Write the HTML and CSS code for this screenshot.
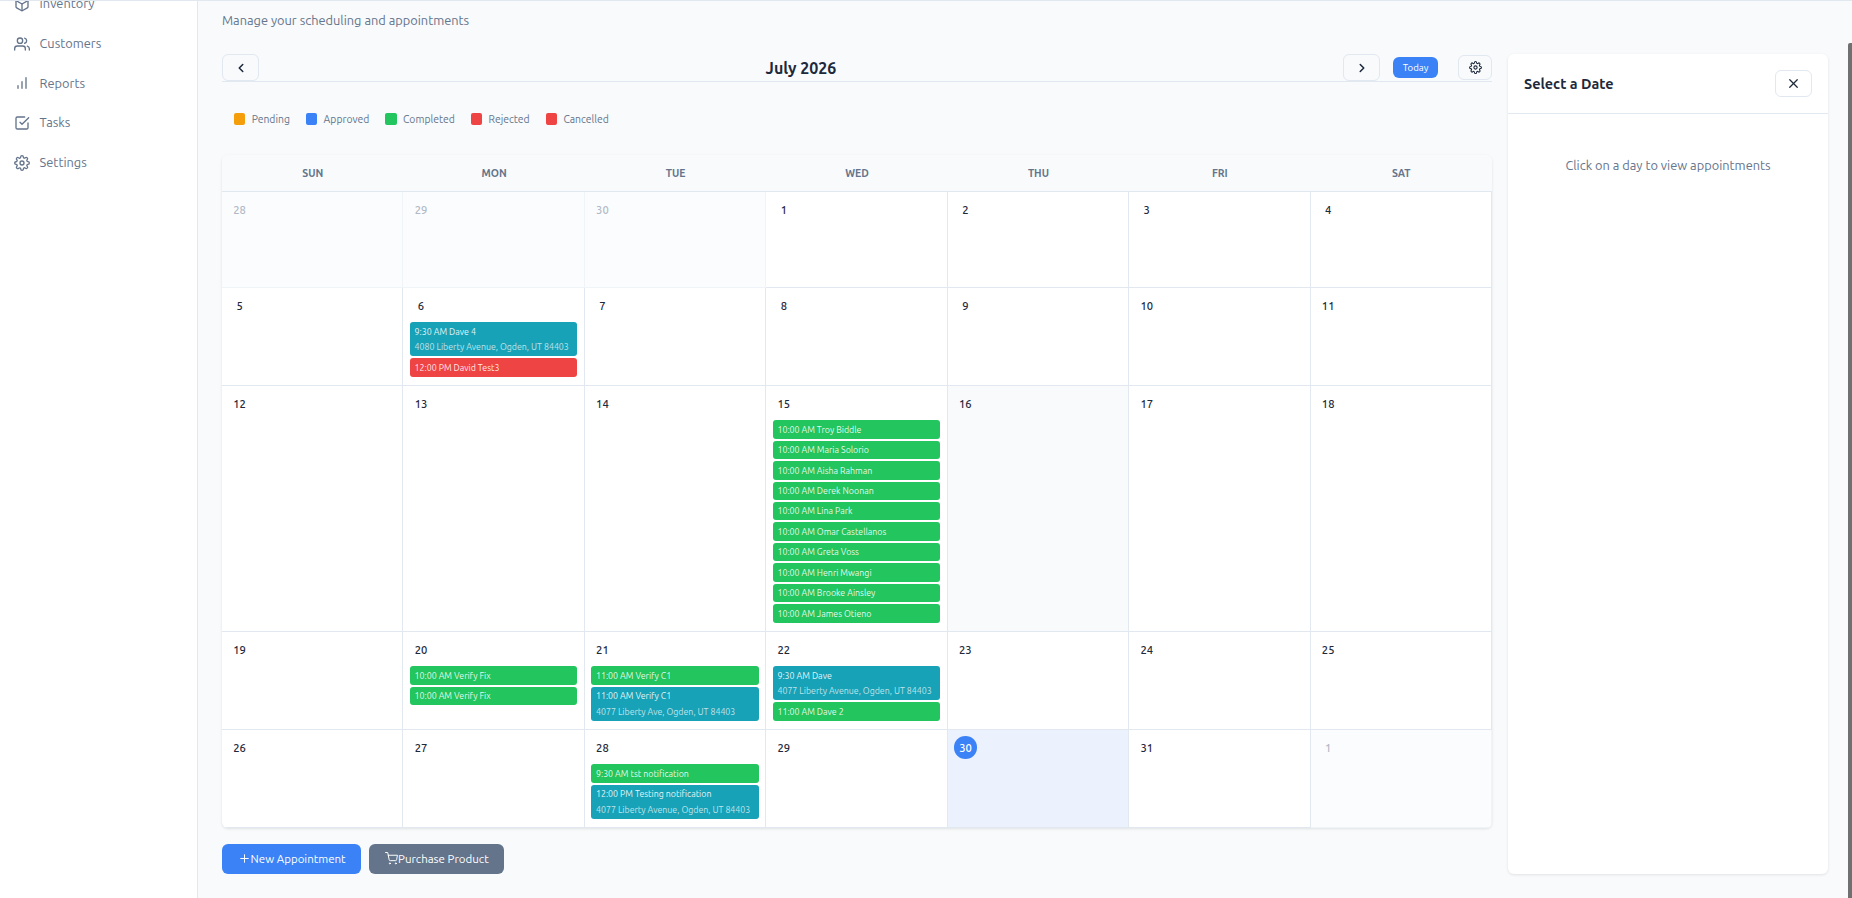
FILE: index.html
```html
<!DOCTYPE html>
<html lang="en">

<head>
    <meta charset="UTF-8">
    <title>Calendar</title>
    <link rel="stylesheet" href="styles.css">
</head>

<body>

    <div class="app">
        <aside class="sidebar">
            <nav class="nav">
                <a class="nav-item">
                    <svg class="icon" viewBox="0 0 24 24"><path d="M21 8a2 2 0 0 0-1-1.73l-7-4a2 2 0 0 0-2 0l-7 4A2 2 0 0 0 3 8v8a2 2 0 0 0 1 1.73l7 4a2 2 0 0 0 2 0l7-4A2 2 0 0 0 21 16Z"/><path d="m3.3 7 8.7 5 8.7-5"/><path d="M12 22V12"/></svg>
                    <span>Inventory</span>
                </a>
                <a class="nav-item">
                    <svg class="icon" viewBox="0 0 24 24"><path d="M17 21v-2a4 4 0 0 0-4-4H5a4 4 0 0 0-4 4v2"/><circle cx="9" cy="7" r="4"/><path d="M23 21v-2a4 4 0 0 0-3-3.87"/><path d="M16 3.13a4 4 0 0 1 0 7.75"/></svg>
                    <span>Customers</span>
                </a>
                <a class="nav-item">
                    <svg class="icon" viewBox="0 0 24 24"><path d="M12 20V10"/><path d="M18 20V4"/><path d="M6 20v-4"/></svg>
                    <span>Reports</span>
                </a>
                <a class="nav-item">
                    <svg class="icon" viewBox="0 0 24 24"><path d="m9 11 3 3L22 4"/><path d="M21 12v7a2 2 0 0 1-2 2H5a2 2 0 0 1-2-2V5a2 2 0 0 1 2-2h11"/></svg>
                    <span>Tasks</span>
                </a>
                <a class="nav-item">
                    <svg class="icon" viewBox="0 0 24 24"><use href="#gear"/></svg>
                    <span>Settings</span>
                </a>
            </nav>
        </aside>

        <main class="main">
            <p class="subtitle">Manage your scheduling and appointments</p>

            <div class="columns">
                <section class="calendar-col">
                    <div class="toolbar">
                        <button class="btn-outline"><svg class="icon chevron" viewBox="0 0 24 24"><path d="m15 18-6-6 6-6"/></svg></button>
                        <h2 class="month">July 2026</h2>
                        <div class="toolbar-right">
                            <button class="btn-outline"><svg class="icon chevron" viewBox="0 0 24 24"><path d="m9 18 6-6-6-6"/></svg></button>
                            <button class="btn-today">Today</button>
                            <button class="btn-outline btn-gear"><svg class="icon" viewBox="0 0 24 24"><use href="#gear"/></svg></button>
                        </div>
                    </div>

                    <div class="legend">
                        <span class="legend-item"><i class="swatch pending"></i>Pending</span>
                        <span class="legend-item"><i class="swatch approved"></i>Approved</span>
                        <span class="legend-item"><i class="swatch completed"></i>Completed</span>
                        <span class="legend-item"><i class="swatch rejected"></i>Rejected</span>
                        <span class="legend-item"><i class="swatch rejected"></i>Cancelled</span>
                    </div>

                    <div class="calendar">
                        <div class="weekdays">
                            <div>SUN</div>
                            <div>MON</div>
                            <div>TUE</div>
                            <div>WED</div>
                            <div>THU</div>
                            <div>FRI</div>
                            <div>SAT</div>
                        </div>
                        <div class="days" id="days"></div>
                    </div>

                    <div class="actions">
                        <button class="btn btn-primary"><svg class="icon" viewBox="0 0 24 24"><path d="M12 5v14"/><path d="M5 12h14"/></svg>New Appointment</button>
                        <button class="btn btn-secondary"><svg class="icon" viewBox="0 0 24 24"><circle cx="9" cy="21" r="1"/><circle cx="20" cy="21" r="1"/><path d="M1 1h4l2.68 13.39a2 2 0 0 0 2 1.61h9.72a2 2 0 0 0 2-1.61L23 6H6"/></svg>Purchase Product</button>
                    </div>
                </section>

                <aside class="panel">
                    <div class="panel-header">
                        <h3>Select a Date</h3>
                        <button class="btn-outline"><svg class="icon close" viewBox="0 0 24 24"><path d="M18 6 6 18"/><path d="m6 6 12 12"/></svg></button>
                    </div>
                    <p class="panel-empty">Click on a day to view appointments</p>
                </aside>
            </div>
        </main>
        <div class="scroll-thumb"></div>
    </div>

    <svg class="defs">
        <symbol id="gear" viewBox="0 0 24 24">
            <circle cx="12" cy="12" r="3"/>
            <path d="M19.4 15a1.65 1.65 0 0 0 .33 1.82l.06.06a2 2 0 0 1-2.83 2.83l-.06-.06a1.65 1.65 0 0 0-1.82-.33 1.65 1.65 0 0 0-1 1.51V21a2 2 0 0 1-4 0v-.09A1.65 1.65 0 0 0 9 19.4a1.65 1.65 0 0 0-1.82.33l-.06.06a2 2 0 0 1-2.83-2.83l.06-.06a1.65 1.65 0 0 0 .33-1.82 1.65 1.65 0 0 0-1.51-1H3a2 2 0 0 1 0-4h.09A1.65 1.65 0 0 0 4.6 9a1.65 1.65 0 0 0-.33-1.82l-.06-.06a2 2 0 0 1 2.83-2.83l.06.06A1.65 1.65 0 0 0 9 4.68a1.65 1.65 0 0 0 1-1.51V3a2 2 0 0 1 4 0v.09a1.65 1.65 0 0 0 1 1.51 1.65 1.65 0 0 0 1.82-.33l.06-.06a2 2 0 0 1 2.83 2.83l-.06.06A1.65 1.65 0 0 0 19.4 9a1.65 1.65 0 0 0 1.51 1H21a2 2 0 0 1 0 4h-.09a1.65 1.65 0 0 0-1.51 1z"/>
        </symbol>
    </svg>

    <script>
        const daysElement = document.getElementById('days');

        const appointments = {
            6: [
                ["confirmed", "9:30 AM Dave 4", "4080 Liberty Avenue, Ogden, UT 84403"],
                ["rejected", "12:00 PM David Test3"]
            ],
            15: [
                ["completed", "10:00 AM Troy Biddle"],
                ["completed", "10:00 AM Maria Solorio"],
                ["completed", "10:00 AM Aisha Rahman"],
                ["completed", "10:00 AM Derek Noonan"],
                ["completed", "10:00 AM Lina Park"],
                ["completed", "10:00 AM Omar Castellanos"],
                ["completed", "10:00 AM Greta Voss"],
                ["completed", "10:00 AM Henri Mwangi"],
                ["completed", "10:00 AM Brooke Ainsley"],
                ["completed", "10:00 AM James Otieno"]
            ],
            20: [
                ["completed", "10:00 AM Verify Fix"],
                ["completed", "10:00 AM Verify Fix"]
            ],
            21: [
                ["completed", "11:00 AM Verify C1"],
                ["confirmed", "11:00 AM Verify C1", "4077 Liberty Ave, Ogden, UT 84403"]
            ],
            22: [
                ["confirmed", "9:30 AM Dave", "4077 Liberty Avenue, Ogden, UT 84403"],
                ["completed", "11:00 AM Dave 2"]
            ],
            28: [
                ["completed", "9:30 AM tst notification"],
                ["confirmed", "12:00 PM Testing notification", "4077 Liberty Avenue, Ogden, UT 84403"]
            ]
        };

        function addDiv(parent, className, text) {
            const div = document.createElement("div");
            div.className = className;
            if (text) div.textContent = text;
            parent.appendChild(div);
            return div;
        }

        // July 2026 starts on a Wednesday
        for (let i = 0; i < 35; i++) {
            const date = new Date(2026, 5, 28 + i);
            const day = date.getDate();
            const inMonth = date.getMonth() === 6;
            const cell = addDiv(daysElement, "day");
            if (!inMonth) cell.classList.add("other-month");
            if (inMonth && day === 16) cell.classList.add("hovered");
            if (inMonth && day === 30) cell.classList.add("today");
            addDiv(cell, "day-number", String(day));

            if (!inMonth) continue;
            for (const [status, title, address] of appointments[day] || []) {
                const item = addDiv(cell, "appt " + status);
                addDiv(item, "appt-title", title);
                if (address) addDiv(item, "appt-address", address);
            }
        }
    </script>
</body>

</html>
```

FILE: styles.css
```css
* {
    box-sizing: border-box;
}

body {
    margin: 0;
    height: 898px;
    overflow: hidden;
    background: #f8fafc;
    color: #1e293b;
    font-family: Ubuntu, "Noto Sans", "Open Sans", sans-serif;
    font-size: 12.8px;
    line-height: 1.5;
}

h2,
h3,
p {
    margin: 0;
}

button {
    font-family: inherit;
    padding: 0;
    cursor: pointer;
}

.icon {
    width: 16px;
    height: 16px;
    flex-shrink: 0;
    fill: none;
    stroke: currentColor;
    stroke-width: 2;
    stroke-linecap: round;
    stroke-linejoin: round;
}

.defs {
    display: none;
}

.app {
    display: flex;
    height: 898px;
    overflow: hidden;
    border-top: 1px solid #e2e8f0;
}

/* sidebar */
.sidebar {
    width: 198px;
    flex-shrink: 0;
    background: #fff;
    border-right: 1px solid #e2e8f0;
    overflow: hidden;
}

.nav {
    margin-top: -17px;
}

.nav-item {
    display: flex;
    align-items: center;
    gap: 9.6px;
    height: 39.7px;
    padding-left: 14px;
    color: #64748b;
}

/* main */
.main {
    flex: 1;
    padding: 10px 24px 0;
}

.subtitle {
    height: 43px;
    color: #64748b;
}

.columns {
    display: flex;
    gap: 16px;
}

.calendar-col {
    width: 1270px;
}

.toolbar {
    display: flex;
    justify-content: space-between;
    align-items: center;
    height: 28px;
    border-bottom: 1px solid #e2e8f0;
}

.toolbar-right {
    display: flex;
    align-items: center;
}

.month {
    font-size: 16px;
    font-weight: 600;
}

.btn-outline {
    display: flex;
    align-items: center;
    justify-content: center;
    width: 37px;
    height: 27px;
    background: transparent;
    color: #1e293b;
    border: 1px solid #e2e8f0;
    border-radius: 6px;
}

.chevron {
    width: 14px;
    height: 14px;
    stroke-width: 2.6;
}

.btn-today {
    width: 45px;
    height: 21px;
    margin: 0 20px 0 13px;
    background: #3b82f6;
    color: #fff;
    border: none;
    border-radius: 6px;
    font-size: 9.6px;
}

.btn-gear {
    width: 34px;
    height: 25px;
}

.btn-gear .icon {
    width: 13px;
    height: 13px;
}

.legend {
    display: flex;
    gap: 16px;
    height: 73px;
    padding: 28px 12px 0;
    color: #64748b;
    font-size: 10.4px;
}

.legend-item {
    display: flex;
    align-items: center;
    gap: 6.4px;
    height: 19px;
}

.swatch {
    width: 11.3px;
    height: 11.2px;
    margin-bottom: 1px;
    border-radius: 2px;
}

.pending {
    background: #f59e0b;
}

.approved {
    background: #3b82f6;
}

.completed {
    background: #22c55e;
}

.rejected {
    background: #ef4444;
}

.confirmed {
    background: #17a2b8;
}

/* calendar */
.calendar {
    background: #fff;
    border-radius: 6px;
    overflow: hidden;
    box-shadow: 0 1px 3px rgba(0, 0, 0, 0.1);
}

.weekdays {
    display: grid;
    grid-template-columns: repeat(7, 1fr);
    height: 37px;
    background: #f8fafc;
    border-bottom: 1px solid #e2e8f0;
    color: #64748b;
    font-size: 10.4px;
    font-weight: 600;
    line-height: 36px;
    text-align: center;
}

.days {
    display: grid;
    grid-template-columns: repeat(7, 1fr);
    grid-template-rows: 96px 97.8px 246.2px 98px 98px;
}

.day {
    padding: 6.4px;
    border-right: 1px solid #e2e8f0;
    border-bottom: 1px solid #e2e8f0;
    min-width: 0;
}

.day-number {
    width: 22.4px;
    height: 22.4px;
    margin-bottom: 5.7px;
    border-radius: 50%;
    font-size: 11.2px;
    font-weight: 500;
    line-height: 24px;
    text-align: center;
}

.other-month {
    background: #f8fafc;
    opacity: 0.5;
}

.other-month .day-number {
    color: #64748b;
}

.hovered {
    background: #f8fafc;
}

.today {
    background: #ebf2fe;
}

.today .day-number {
    width: 22.8px;
    background: #3b82f6;
    color: #fff;
}

.appt {
    margin-bottom: 2px;
    padding: 2.4px 4.8px 0.8px;
    border-radius: 3px;
    color: rgba(255, 255, 255, 0.9);
    font-size: 8.8px;
    line-height: 15.25px;
    white-space: nowrap;
    overflow: hidden;
}

.appt-address {
    opacity: 0.8;
}

/* bottom buttons */
.actions {
    display: flex;
    gap: 8px;
    margin-top: 16px;
}

.btn {
    display: flex;
    align-items: center;
    height: 30px;
    padding: 0 0 1px 16px;
    color: #fff;
    border: none;
    border-radius: 6px;
    font-size: 11.5px;
}

.btn .icon {
    width: 13px;
    height: 13px;
    stroke-width: 1.8;
}

.btn-primary {
    width: 139px;
    padding-left: 15.6px;
    background: #3b82f6;
}

.btn-secondary {
    width: 135px;
    background: #64748b;
}

/* side panel */
.panel {
    width: 320px;
    height: 820px;
    background: #fff;
    border-radius: 6px;
    box-shadow: 0 1px 3px rgba(0, 0, 0, 0.1);
}

.panel-header {
    display: flex;
    justify-content: space-between;
    align-items: center;
    height: 60px;
    padding: 0 16px;
    border-bottom: 1px solid #e2e8f0;
}

.panel-header h3 {
    padding-top: 2px;
    font-size: 14.4px;
    font-weight: 600;
}

.close {
    width: 15px;
    height: 15px;
}

.panel-empty {
    margin-top: 42px;
    color: #64748b;
    text-align: center;
}

.scroll-thumb {
    position: absolute;
    top: 43px;
    right: 0;
    width: 4px;
    height: 855px;
    background: #707070;
    border-radius: 2px 0 0 0;
}
```
